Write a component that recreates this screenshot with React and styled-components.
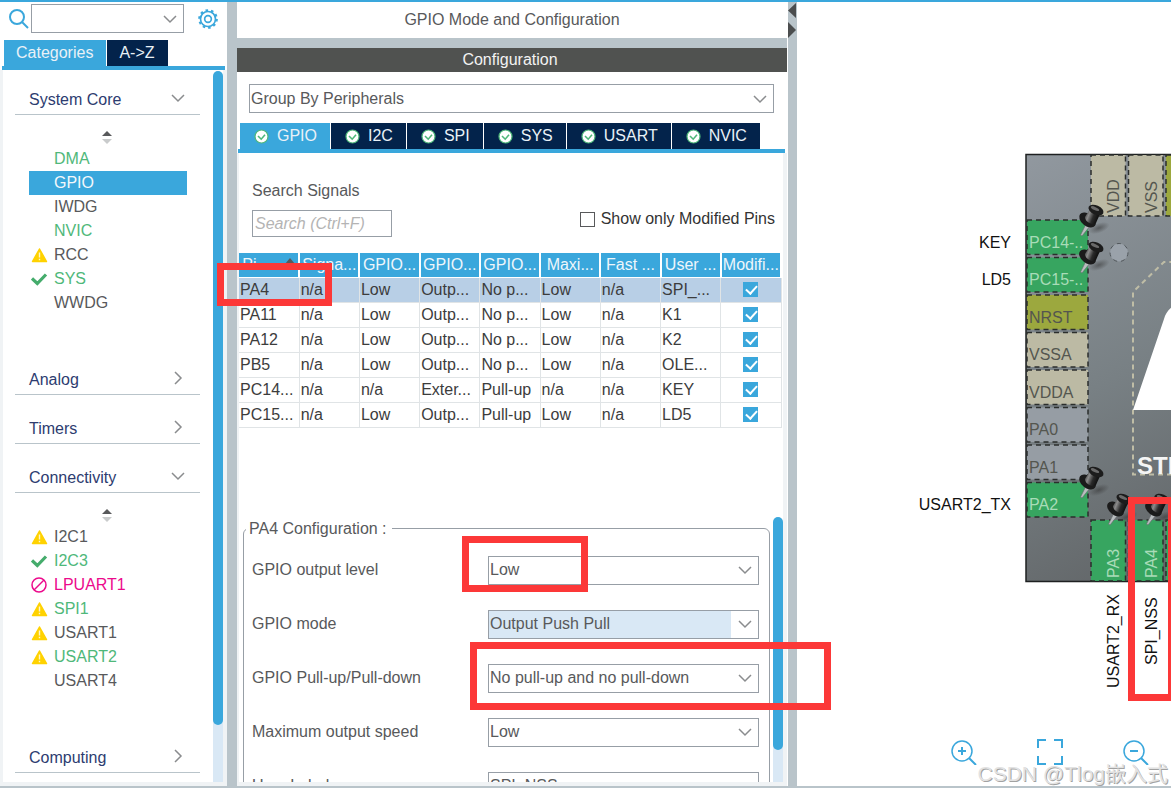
import styled, { createGlobalStyle } from "styled-components";

const GlobalStyle = createGlobalStyle`
  * {
    box-sizing: border-box;
  }
  body {
    margin: 0;
    background-color: #fff;
    color: #58595b;
    font-family: "Liberation Sans", Arial, sans-serif;
    font-size: 16px;
    line-height: 20px;
  }
  button,
  input,
  select {
    font: inherit;
    color: inherit;
  }
`;

const Window = styled.div`
  position: relative;
  display: flex;
  flex-direction: column;
  height: 100vh;
  padding-bottom: 5px;
  overflow: hidden;
`;

const Workspace = styled.main`
  flex: 1;
  min-height: 0;
  display: grid;
  grid-template-columns: minmax(0, 227fr) 10px minmax(0, 551fr) 9px minmax(0, 374fr);
  border-top: 2px solid #3aa7dc;
  border-bottom: 2px solid #b9c4ca;
`;

const Splitter = styled.div`
  background-color: #b9c4ca;
`;

const Chevron = styled.svg`
  width: 14px;
  height: 14px;
  fill: none;
  stroke: #8a8c8e;
  stroke-width: 1.5;
`;

/* ---- drop-downs ---- */

const SelectBox = styled.div`
  position: relative;
  flex: 1;
  min-width: 0;
  height: 29px;
  border: 1px solid #979ea6;
  background-color: #fff;

  select {
    appearance: none;
    display: block;
    width: ${(props) => (props.$shaded ? "calc(100% - 27px)" : "100%")};
    height: 100%;
    padding: 0 1px;
    border: 0;
    border-radius: 0;
    outline: 0;
    background-color: ${(props) => (props.$shaded ? "#d9e8f5" : "transparent")};
  }

  svg {
    position: absolute;
    top: calc(50% - 7px);
    right: 6px;
    pointer-events: none;
  }
`;

function ChevronDown() {
  return (
    <Chevron viewBox="0 0 14 14" aria-hidden="true">
      <path d="M1 4l6 6 6-6" />
    </Chevron>
  );
}

function ChevronRight() {
  return (
    <Chevron viewBox="0 0 14 14" aria-hidden="true">
      <path d="M4 1l6 6-6 6" />
    </Chevron>
  );
}

function Dropdown({ value, shaded, ...selectProps }) {
  return (
    <SelectBox $shaded={shaded}>
      <select {...selectProps}>
        <option>{value}</option>
      </select>
      <ChevronDown />
    </SelectBox>
  );
}

/* ---- left side ---- */

const Sidebar = styled.nav`
  display: flex;
  flex-direction: column;
  min-height: 0;
`;

const SidebarTools = styled.div`
  display: flex;
  align-items: center;
  height: 33px;
  padding: 0 9px 0 7px;
  margin-bottom: 5px;
`;

const SearchIcon = styled.svg`
  width: 24px;
  height: 24px;
  fill: none;
  stroke: #3aa7dc;
  stroke-width: 2;
`;

const IconButton = styled.button`
  display: flex;
  padding: 0;
  margin-left: 14px;
  border: 0;
  background: none;

  svg {
    width: 20px;
    height: 20px;
    fill: none;
    stroke: #3aa7dc;
    stroke-width: 2;
  }
`;

const SidebarTabs = styled.div`
  display: flex;
  gap: 1px;
  margin: 0 2px 0 2px;
  padding-left: 2px;
  border-bottom: 4px solid #3aa7dc;
`;

const SidebarTab = styled.button`
  height: 26px;
  padding: 0 13px 0 12px;
  border: 0;
  color: #e9f1f7;
  background-color: ${(props) => (props.$active ? "#3aa7dc" : "#03234b")};
`;

const SidebarScroll = styled.div`
  flex: 1;
  min-height: 0;
  display: flex;
  overflow: hidden;
  border: solid #f0f3f5;
  border-width: 0 4px 4px 3px;
`;

const Categories = styled.div`
  flex: 1;
  min-width: 0;
  padding: 11px 13px 0 12px;
`;

const ScrollTrack = styled.div`
  width: 10px;
  padding-top: ${(props) => props.$top || 0}px;
  background: linear-gradient(#fff 50%, #d9e8f5 50%);
`;

const ScrollThumb = styled.div`
  height: ${(props) => props.$size}%;
  border-radius: 5px;
  background-color: #3aa7dc;
`;

const Category = styled.section`
  margin-bottom: 15px;
`;

const CategoryHeader = styled.button`
  display: flex;
  align-items: center;
  justify-content: space-between;
  width: 100%;
  height: 34px;
  padding: 0 15px 0 14px;
  border: 0;
  border-bottom: 1px solid #b9c4ca;
  color: #2d3c70;
  background: none;

  span {
    padding-top: 4px;
  }
`;

const CategoryBody = styled.div`
  padding: 15px 13px 46px 14px;
  margin-bottom: -15px;
`;

const SortMark = styled.svg`
  display: block;
  width: 12px;
  height: 14px;
  margin: 0 auto 3px 72px;
`;

const ItemList = styled.ul`
  margin: 0;
  padding: 0;
  list-style: none;
`;

const itemColors = {
  on: "#4fb87a",
  off: "#58595b",
  blocked: "#ec0a8c",
  selected: "#f3f8fb",
};

const Item = styled.li`
  display: flex;
  align-items: center;
  height: 24px;
  color: ${(props) => itemColors[props.$state]};
  background-color: ${(props) => (props.$state === "selected" ? "#3aa7dc" : "transparent")};
`;

const ItemIcon = styled.span`
  display: flex;
  width: 25px;
  padding-left: 2px;

  svg {
    width: 17px;
    height: 16px;
  }
`;

function StatusIcon({ kind }) {
  if (kind === "warning") {
    return (
      <svg viewBox="0 0 17 16" aria-hidden="true">
        <path d="M8.500 2L15.500 14.500H1.500z" fill="#ffd200" stroke="#ffd200" strokeWidth="1.500" strokeLinejoin="round" />
        <path d="M8.500 5.500v5M8.500 11.800v1.500" stroke="#fff6c8" strokeWidth="1.400" />
      </svg>
    );
  }
  if (kind === "check") {
    return (
      <svg viewBox="0 0 17 16" aria-hidden="true">
        <path d="M1 7.500l5.300 5L15 3.500" fill="none" stroke="#45ac6c" strokeWidth="3.200" />
      </svg>
    );
  }
  if (kind === "blocked") {
    return (
      <svg viewBox="0 0 17 16" aria-hidden="true">
        <circle cx="8" cy="8" r="7" fill="none" stroke="#ec0a8c" strokeWidth="1.500" />
        <path d="M13 3L3 13" stroke="#ec0a8c" strokeWidth="1.500" />
      </svg>
    );
  }
  return null;
}

const categories = [
  {
    name: "System Core",
    items: [
      { name: "DMA", state: "on" },
      { name: "GPIO", state: "selected" },
      { name: "IWDG", state: "off" },
      { name: "NVIC", state: "on" },
      { name: "RCC", state: "off", icon: "warning" },
      { name: "SYS", state: "on", icon: "check" },
      { name: "WWDG", state: "off" },
    ],
  },
  { name: "Analog" },
  { name: "Timers" },
  {
    name: "Connectivity",
    items: [
      { name: "I2C1", state: "off", icon: "warning" },
      { name: "I2C3", state: "on", icon: "check" },
      { name: "LPUART1", state: "blocked", icon: "blocked" },
      { name: "SPI1", state: "on", icon: "warning" },
      { name: "USART1", state: "off", icon: "warning" },
      { name: "USART2", state: "on", icon: "warning" },
      { name: "USART4", state: "off" },
    ],
  },
  { name: "Computing" },
];

function CategoryPanel() {
  return (
    <Sidebar>
      <SidebarTools>
        <SearchIcon viewBox="0 0 24 24" aria-hidden="true">
          <circle cx="10" cy="10" r="7" />
          <path d="M15 15l6 6" />
        </SearchIcon>
        <Dropdown value="" aria-label="Search peripheral" />
        <IconButton aria-label="Settings">
          <svg viewBox="0 0 24 24">
            <circle cx="12" cy="12" r="9" />
            <circle cx="12" cy="12" r="4" />
            <circle cx="12" cy="12" r="10.600" strokeDasharray="3.100 3.560" strokeWidth="2.400" />
          </svg>
        </IconButton>
      </SidebarTools>
      <SidebarTabs>
        <SidebarTab $active>Categories</SidebarTab>
        <SidebarTab>A-&gt;Z</SidebarTab>
      </SidebarTabs>
      <SidebarScroll>
        <Categories>
          {categories.map((category) => (
            <Category key={category.name}>
              <CategoryHeader>
                <span>{category.name}</span>
                {category.items ? <ChevronDown /> : <ChevronRight />}
              </CategoryHeader>
              {category.items && (
                <CategoryBody>
                  <SortMark viewBox="0 0 12 14" aria-hidden="true">
                    <path d="M1 6l5-5 5 5z" fill="#58595b" />
                    <path d="M1 9h10l-5 5z" fill="#c9cbcc" />
                  </SortMark>
                  <ItemList>
                    {category.items.map((item) => (
                      <Item key={item.name} $state={item.state}>
                        <ItemIcon>
                          <StatusIcon kind={item.icon} />
                        </ItemIcon>
                        {item.name}
                      </Item>
                    ))}
                  </ItemList>
                </CategoryBody>
              )}
            </Category>
          ))}
        </Categories>
        <ScrollTrack $top={1}>
          <ScrollThumb $size={92} />
        </ScrollTrack>
      </SidebarScroll>
    </Sidebar>
  );
}

/* ---- middle ---- */

const ConfigPanel = styled.section`
  display: flex;
  flex-direction: column;
  min-height: 0;
  padding-right: 1px;
`;

const PanelTitle = styled.h1`
  margin: 0;
  padding: 8px 0;
  font-size: 16px;
  font-weight: normal;
  text-align: center;
`;

const PanelBar = styled.h2`
  margin: 0;
  padding: 2px 4px 2px 0;
  border-top: 10px solid #b9c4ca;
  font-size: 16px;
  font-weight: normal;
  text-align: center;
  color: #f3f3f3;
  background-color: #505250;
`;

const GroupRow = styled.div`
  display: flex;
  padding: 12px 13px 10px 12px;
`;

const PeripheralTabs = styled.div`
  display: flex;
  gap: 1px;
  margin: 0 2px 0 1px;
  padding-left: 2px;
  border-bottom: 4px solid #3aa7dc;
`;

const PeripheralTab = styled.button`
  display: flex;
  align-items: center;
  gap: 8px;
  height: 26px;
  padding: 0 13px 0 14px;
  border: 0;
  color: #e9f1f7;
  background-color: ${(props) => (props.$active ? "#3aa7dc" : "#03234b")};

  svg {
    width: 15px;
    height: 15px;
  }
`;

const ConfigContent = styled.div`
  flex: 1;
  min-height: 0;
  display: flex;
  flex-direction: column;
  overflow: hidden;
  border: solid #f0f3f5;
  border-width: 0 4px 4px 2px;
`;

const SearchArea = styled.div`
  display: flex;
  align-items: flex-end;
  justify-content: space-between;
  padding: 28px 8px 16px 13px;
`;

const SearchField = styled.div`
  display: flex;
  flex-direction: column;
  gap: 9px;

  input {
    width: 140px;
    height: 27px;
    padding: 0 2px;
    border: 1px solid #979ea6;
    outline: 0;
  }
  input::placeholder {
    color: #b4b4b4;
    font-style: italic;
    opacity: 1;
  }
`;

const PinsFilter = styled.label`
  display: flex;
  align-items: center;
  gap: 6px;
  padding-bottom: 8px;
  color: #333;

  input {
    appearance: none;
    width: 15px;
    height: 15px;
    margin: 0;
    border: 1px solid #58595b;
  }
`;

const PinTable = styled.table`
  width: calc(100% - 1px);
  table-layout: fixed;
  border-collapse: collapse;
  color: #3c3c3c;

  th,
  td {
    height: 25px;
    padding: 0;
    overflow: hidden;
    white-space: nowrap;
  }
  th {
    height: 24px;
    border-right: 2px solid #fff;
    border-bottom: 1px solid #fff;
    font-weight: normal;
    color: #eef6fb;
    background-color: #3aa7dc;
  }
  th svg {
    width: 10px;
    height: 6px;
    margin: 0 0 6px 15px;
  }
  td {
    padding-left: 1px;
    border-right: 1px solid #e0e4e6;
    border-bottom: 1px solid #e0e4e6;
  }
  td:last-child {
    padding: 0;
  }
`;

const PinRow = styled.tr`
  background-color: ${(props) => (props.$selected ? "#b8cfe6" : "#fff")};
`;

const Tick = styled.input`
  appearance: none;
  display: block;
  width: 15px;
  height: 15px;
  margin: 0 auto;
  background-color: #3aa7dc;

  &::after {
    content: "";
    display: block;
    width: 5px;
    height: 9px;
    margin: 1px 0 0 5px;
    border: solid #fff;
    border-width: 0 2px 2px 0;
    transform: rotate(42deg);
  }
`;

const PinConfig = styled.div`
  flex: 1;
  min-height: 0;
  display: flex;
  margin-top: 89px;
  overflow: hidden;
`;

const PinFieldset = styled.fieldset`
  flex: 1;
  min-width: 0;
  height: 400px;
  margin: 2px 3px 0 4px;
  padding: 17px 10px 0 8px;
  border: 1px solid #979ea6;
  border-radius: 6px;

  legend {
    margin-left: -6px;
    padding: 0 5px 0 3px;
  }
`;

const SettingRow = styled.div`
  display: grid;
  grid-template-columns: 236fr 271fr;
  align-items: center;
  height: 29px;
  margin-bottom: 25px;

  input {
    min-width: 0;
    height: 29px;
    padding: 0 1px;
    border: 1px solid #979ea6;
    outline: 0;
  }
`;

const peripherals = ["GPIO", "I2C", "SPI", "SYS", "USART", "NVIC"];

const columns = ["Signa...", "GPIO...", "GPIO...", "GPIO...", "Maxi...", "Fast ...", "User ...", "Modifi..."];

const pins = [
  ["PA4", "n/a", "Low", "Outp...", "No p...", "Low", "n/a", "SPI_..."],
  ["PA11", "n/a", "Low", "Outp...", "No p...", "Low", "n/a", "K1"],
  ["PA12", "n/a", "Low", "Outp...", "No p...", "Low", "n/a", "K2"],
  ["PB5", "n/a", "Low", "Outp...", "No p...", "Low", "n/a", "OLE..."],
  ["PC14...", "n/a", "n/a", "Exter...", "Pull-up", "n/a", "n/a", "KEY"],
  ["PC15...", "n/a", "Low", "Outp...", "Pull-up", "Low", "n/a", "LD5"],
];

const settings = [
  { id: "level", label: "GPIO output level", value: "Low" },
  { id: "mode", label: "GPIO mode", value: "Output Push Pull", shaded: true },
  { id: "pull", label: "GPIO Pull-up/Pull-down", value: "No pull-up and no pull-down" },
  { id: "speed", label: "Maximum output speed", value: "Low" },
];

function Configuration() {
  return (
    <ConfigPanel>
      <PanelTitle>GPIO Mode and Configuration</PanelTitle>
      <PanelBar>Configuration</PanelBar>
      <GroupRow>
        <Dropdown value="Group By Peripherals" aria-label="Grouping" />
      </GroupRow>
      <PeripheralTabs>
        {peripherals.map((name, index) => (
          <PeripheralTab key={name} $active={index === 0}>
            <svg viewBox="0 0 15 15" aria-hidden="true">
              <circle cx="7.500" cy="7.500" r="6.500" fill="#fff" stroke="#4fb87a" strokeWidth="1.200" />
              <path d="M4 7l3.200 3.200L11 5.800" fill="none" stroke="#4fb87a" strokeWidth="1.600" />
            </svg>
            {name}
          </PeripheralTab>
        ))}
      </PeripheralTabs>
      <ConfigContent>
        <SearchArea>
          <SearchField>
            <label htmlFor="signals">Search Signals</label>
            <input id="signals" placeholder="Search (Ctrl+F)" />
          </SearchField>
          <PinsFilter>
            <input type="checkbox" />
            Show only Modified Pins
          </PinsFilter>
        </SearchArea>
        <PinTable>
          <thead>
            <tr>
              <th>
                Pi...
                <svg viewBox="0 0 10 6" aria-hidden="true">
                  <path d="M0 6l5-6 5 6z" fill="#58595b" />
                </svg>
              </th>
              {columns.map((name, index) => (
                <th key={index}>{name}</th>
              ))}
            </tr>
          </thead>
          <tbody>
            {pins.map((cells, row) => (
              <PinRow key={cells[0]} $selected={row === 0}>
                {cells.map((cell, index) => (
                  <td key={index}>{cell}</td>
                ))}
                <td>
                  <Tick type="checkbox" defaultChecked aria-label={cells[0]} />
                </td>
              </PinRow>
            ))}
          </tbody>
        </PinTable>
        <PinConfig>
          <PinFieldset>
            <legend>PA4 Configuration :</legend>
            {settings.map((setting) => (
              <SettingRow key={setting.id}>
                <label htmlFor={setting.id}>{setting.label}</label>
                <Dropdown id={setting.id} value={setting.value} shaded={setting.shaded} />
              </SettingRow>
            ))}
            <SettingRow>
              <label htmlFor="userLabel">User Label</label>
              <input id="userLabel" defaultValue="SPI_NSS" />
            </SettingRow>
          </PinFieldset>
          <ScrollTrack>
            <ScrollThumb $size={88} />
          </ScrollTrack>
        </PinConfig>
      </ConfigContent>
    </ConfigPanel>
  );
}

/* ---- right side ---- */

const Pinout = styled.section`
  position: relative;
  display: flex;
  flex-direction: column;
  justify-content: space-between;
  min-height: 0;
  overflow: hidden;
`;

const Chip = styled.svg`
  flex-shrink: 0;
  width: 374px;
  height: 700px;
  font-size: 16px;
`;

const ZoomBar = styled.div`
  display: flex;
  gap: 60px;
  padding: 0 0 21px 154px;

  button {
    display: flex;
    padding: 0;
    border: 0;
    background: none;
  }
  svg {
    width: 26px;
    height: 26px;
    fill: none;
    stroke: #3aa7dc;
    stroke-width: 2;
  }
`;

const Watermark = styled.span`
  position: absolute;
  right: 3px;
  bottom: 0;
  font-family: "Liberation Sans", "Noto Sans CJK SC", sans-serif;
  font-size: 21px;
  line-height: 24px;
  white-space: nowrap;
  color: #e2e2e2;
  text-shadow: 1px 1px 0 #a2a2a2;
`;

const pinFills = {
  used: "#37a560",
  reset: "#9ca83e",
  power: "#bcbaa4",
  free: "#969da4",
};

const leftPins = [
  { name: "PC14-..", kind: "used", label: "KEY" },
  { name: "PC15-..", kind: "used", label: "LD5" },
  { name: "NRST", kind: "reset" },
  { name: "VSSA", kind: "power" },
  { name: "VDDA", kind: "power" },
  { name: "PA0", kind: "free" },
  { name: "PA1", kind: "free" },
  { name: "PA2", kind: "used", label: "USART2_TX" },
];

const topPins = [
  { name: "VDD", kind: "power" },
  { name: "VSS", kind: "power" },
  { name: "", kind: "reset" },
];

const bottomPins = [
  { name: "PA3", kind: "used", label: "USART2_RX", end: 688 },
  { name: "PA4", kind: "used", label: "SPI_NSS", end: 665 },
  { name: "", kind: "used" },
];

const thumbtacks = [
  [1080, 205],
  [1080, 242],
  [1080, 467],
  [1108, 494],
  [1146, 494],
];

function pinText(kind) {
  return kind === "used" ? "#a9dcb8" : "#54564f";
}

function VerticalPin({ pin, index, top, height }) {
  const x = 1091 + index * 37.5;
  return (
    <g>
      <rect x={x} y={top} width="34.500" height={height} fill={pinFills[pin.kind]} stroke="#2b2e2c" strokeWidth="1.500" strokeDasharray="5 4" />
      <text fill={pinText(pin.kind)} transform={`translate(${x + 28} ${top + height - 3}) rotate(-90)`}>
        {pin.name}
      </text>
      {pin.label && (
        <text fill="#111" transform={`translate(${x + 28} ${pin.end}) rotate(-90)`}>
          {pin.label}
        </text>
      )}
    </g>
  );
}

function ChipView() {
  return (
    <Chip viewBox="797 2 374 700" role="img" aria-label="Pinout view">
      <defs>
        <linearGradient id="body" x1="1026" y1="155" x2="1240" y2="581" gradientUnits="userSpaceOnUse">
          <stop offset="0" stopColor="#91989f" />
          <stop offset="0.500" stopColor="#788084" />
          <stop offset="1" stopColor="#5d6062" />
        </linearGradient>
        <linearGradient id="head" x1="0" y1="0" x2="1" y2="0.400">
          <stop offset="0" stopColor="#1a1a1a" />
          <stop offset="0.350" stopColor="#8c8c8c" />
          <stop offset="0.650" stopColor="#2a2a2a" />
          <stop offset="1" stopColor="#0c0c0c" />
        </linearGradient>
        <radialGradient id="shade">
          <stop offset="0" stopColor="#333" stopOpacity="0.550" />
          <stop offset="1" stopColor="#333" stopOpacity="0" />
        </radialGradient>
        <symbol id="tack" viewBox="0 0 30 30" overflow="visible">
          <ellipse cx="19" cy="23" rx="11" ry="5" fill="url(#shade)" transform="rotate(-20 19 23)" />
          <path d="M6 19l4 2-8 10-1.500-1z" fill="#b9bdbf" stroke="#63676a" strokeWidth="0.600" />
          <ellipse cx="7.500" cy="15" rx="9.500" ry="6" fill="#1b1b1b" transform="rotate(38 7.500 15)" />
          <path d="M10 4l10 5-4 9c-3 3-11-1-11-6z" fill="url(#head)" />
          <ellipse cx="16" cy="5" rx="8" ry="4.600" fill="#1c1c1c" transform="rotate(24 16 5)" />
          <ellipse cx="15" cy="3.600" rx="4.500" ry="1.600" fill="#6a6a6a" transform="rotate(24 15 3.600)" />
        </symbol>
      </defs>
      <rect x="1026" y="154.500" width="420" height="427" fill="url(#body)" stroke="#1e2021" strokeWidth="1.500" />

      {leftPins.map((pin, index) => {
        const y = 220 + index * 37.5;
        return (
          <g key={pin.name}>
            <rect x="1027" y={y} width="61" height="34.500" fill={pinFills[pin.kind]} stroke="#2b2e2c" strokeWidth="1.500" strokeDasharray="5 4" />
            <text x="1029" y={y + 27.5} fill={pinText(pin.kind)}>
              {pin.name}
            </text>
            {pin.label && (
              <text x="1011" y={y + 27.5} fill="#111" textAnchor="end">
                {pin.label}
              </text>
            )}
          </g>
        );
      })}
      {topPins.map((pin, index) => (
        <VerticalPin key={index} pin={pin} index={index} top={155} height={61} />
      ))}
      {bottomPins.map((pin, index) => (
        <VerticalPin key={index} pin={pin} index={index} top={520} height={61} />
      ))}

      <circle cx="1119" cy="252.500" r="9" fill="#9aa2aa" stroke="#50565a" strokeWidth="1" strokeDasharray="4 4" />
      <path d="M1190 474.500h-57V292l31-30h26" fill="none" stroke="#bfbda6" strokeWidth="2" strokeDasharray="5 4" />
      <path d="M1180 302c-10 5-14 10-16 17l-31 91h47z" fill="#fff" />
      <text x="1137" y="474" fill="#f4f5f5" fontSize="24" fontWeight="bold">
        STM32
      </text>

      {thumbtacks.map(([x, y]) => (
        <use key={`${x}-${y}`} href="#tack" x={x} y={y} width="30" height="30" />
      ))}
    </Chip>
  );
}

function PinoutPanel() {
  return (
    <Pinout>
      <ChipView />
      <ZoomBar>
        <button aria-label="Zoom in">
          <svg viewBox="0 0 26 26">
            <circle cx="11" cy="12" r="10" strokeWidth="1.500" />
            <path d="M18 19l7 7M7 12h8M11 8v8" />
          </svg>
        </button>
        <button aria-label="Best fit">
          <svg viewBox="0 0 26 26">
            <path d="M1 9V1h8M17 1h8v8M25 17v8h-8M9 25H1v-8" />
          </svg>
        </button>
        <button aria-label="Zoom out">
          <svg viewBox="0 0 26 26">
            <circle cx="11" cy="12" r="10" strokeWidth="1.500" />
            <path d="M18 19l7 7M7 12h8" />
          </svg>
        </button>
      </ZoomBar>
      <Watermark>CSDN @Tlog嵌入式</Watermark>
    </Pinout>
  );
}

/* ---- red marks over the window ---- */

const Mark = styled.div`
  position: absolute;
  left: ${(props) => props.$x}px;
  top: ${(props) => props.$y}px;
  width: ${(props) => props.$w}px;
  height: ${(props) => props.$h}px;
  border: 7px solid #fc3838;
  pointer-events: none;
`;

function App() {
  return (
    <>
      <GlobalStyle />
      <Window>
        <Workspace>
          <CategoryPanel />
          <Splitter />
          <Configuration />
          <Splitter>
            <svg width="9" height="36" viewBox="0 0 9 36" aria-hidden="true">
              <path d="M8 1v15L0 8.500zM0 20v16l8-8z" fill="#4b4d4e" />
            </svg>
          </Splitter>
          <PinoutPanel />
        </Workspace>
        <Mark $x={217} $y={263} $w={115} $h={43} />
        <Mark $x={462} $y={536} $w={126} $h={56} />
        <Mark $x={470} $y={642} $w={361} $h={68} />
        <Mark $x={1128} $y={497} $w={47} $h={204} />
      </Window>
    </>
  );
}

export default App;
